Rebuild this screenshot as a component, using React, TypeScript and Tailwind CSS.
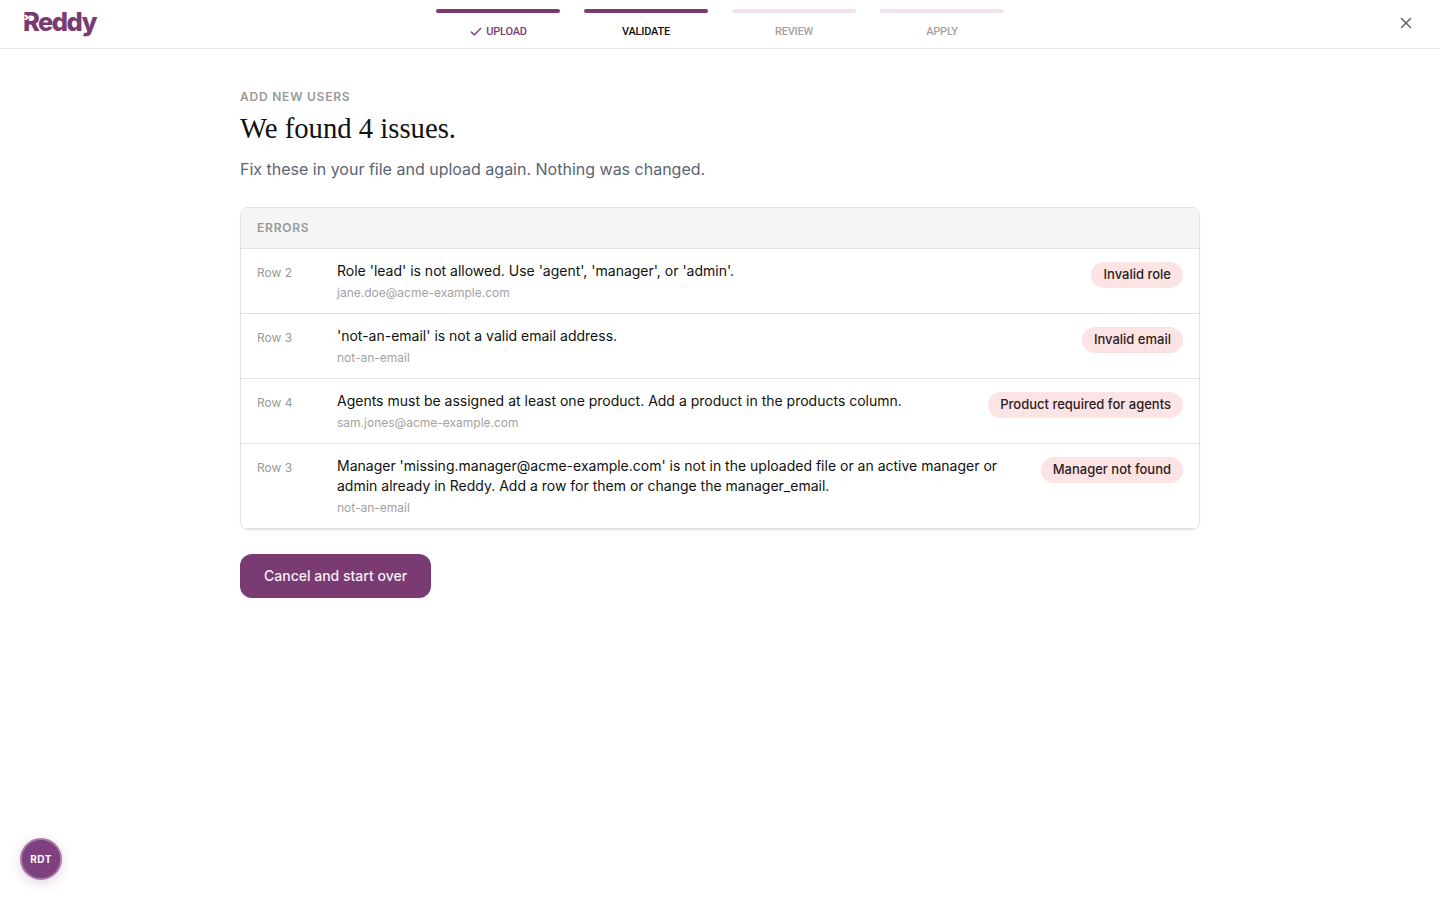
import { Check, X } from "lucide-react";

const steps = [
  { label: "UPLOAD", bar: "bg-[#7a3b72]", text: "text-[#7a3b72]", done: true },
  { label: "VALIDATE", bar: "bg-[#7a3b72]", text: "text-[#111111]", done: false },
  { label: "REVIEW", bar: "bg-[#f0e2ef]", text: "text-[#a3a3a3]", done: false },
  { label: "APPLY", bar: "bg-[#f0e2ef]", text: "text-[#a3a3a3]", done: false },
];

const errors = [
  {
    row: "Row 2",
    message: ["Role 'lead' is not allowed. Use 'agent', 'manager', or 'admin'."],
    detail: "jane.doe@acme-example.com",
    tag: "Invalid role",
  },
  {
    row: "Row 3",
    message: ["'not-an-email' is not a valid email address."],
    detail: "not-an-email",
    tag: "Invalid email",
  },
  {
    row: "Row 4",
    message: ["Agents must be assigned at least one product. Add a product in the products column."],
    detail: "sam.jones@acme-example.com",
    tag: "Product required for agents",
  },
  {
    row: "Row 3",
    message: [
      "Manager 'missing.manager@acme-example.com' is not in the uploaded file or an active manager or",
      "admin already in Reddy. Add a row for them or change the manager_email.",
    ],
    detail: "not-an-email",
    tag: "Manager not found",
  },
];

export default function App() {
  return (
    <div className="min-h-[900px] bg-white font-['Inter',sans-serif] relative">
      {/* Header */}
      <div className="h-[49px] border-b border-[#ebebeb] flex justify-between px-6">
        <div className="relative w-[76px] pt-[4px] text-[25.5px] leading-[36px] font-extrabold tracking-[-0.06em] text-[#7a3b72]">
          <span className="ml-[-1px]">Reddy</span>
          {/* arrow notch cut into the R's stem */}
          <svg className="absolute left-0 top-[15px] h-[5px] w-[6px]" viewBox="0 0 6 5">
            <path d="M0 0 L2.5 0 L5.5 2.5 L2.5 5 L0 5 L2 2.5 Z" fill="#ffffff" />
          </svg>
        </div>
        <div className="flex gap-6 pt-[9px]">
          {steps.map((step) => (
            <div key={step.label} className="w-[124px] flex flex-col items-center">
              <div className={`w-full h-1 rounded-full ${step.bar}`}></div>
              <div className={`mt-[11px] flex items-center gap-[3px] font-['Roboto',sans-serif] text-[11px] leading-[16px] font-medium tracking-[-0.02em] ${step.text}`}>
                {step.done && <Check className="h-3.5 w-3.5" strokeWidth={2.25} />}
                {step.label}
              </div>
            </div>
          ))}
        </div>
        <div className="w-[76px] flex justify-end pt-[14px] pr-px">
          <X className="h-[18px] w-[18px] text-[#666666]" strokeWidth={2} />
        </div>
      </div>

      {/* Content */}
      <div className="w-[960px] mx-auto pt-10">
        <div className="text-xs leading-4 font-semibold tracking-[0.065em] text-[#999999]">ADD NEW USERS</div>
        <h1 className="mt-[3px] font-['Liberation_Serif',serif] text-[28.7px] leading-[40px] font-normal text-[#111111]">
          We found 4 issues.
        </h1>
        <p className="mt-[9px] text-base leading-6 text-[#5b6472]">
          Fix these in your file and upload again. Nothing was changed.
        </p>

        <div className="mt-[26px] border border-[#e3e3e3] rounded-lg overflow-hidden shadow-[0_1px_2px_rgba(0,0,0,0.05)]">
          <div className="h-[41px] bg-[#f5f5f5] border-b border-[#e3e3e3] px-4 flex items-center text-xs font-semibold tracking-[0.065em] text-[#999999]">
            ERRORS
          </div>
          {errors.map((err, i) => (
            <div key={i} className="flex items-start pl-4 pr-4 pt-3 pb-[10px] border-b border-[#e3e3e3]">
              <div className="w-20 pt-[3px] text-xs leading-[18px] text-[#999999]">{err.row}</div>
              <div className="flex-1">
                <div className="text-sm leading-5 text-[#111111]">
                  {err.message.map((line) => (
                    <div key={line}>{line}</div>
                  ))}
                </div>
                <div className="mt-[2px] text-xs leading-5 text-[#a3a3a3]">{err.detail}</div>
              </div>
              <div className="mt-px h-[26px] px-3 rounded-full bg-[#fde4e4] text-[13px] font-medium text-[#2b2024] flex items-center">
                {err.tag}
              </div>
            </div>
          ))}
        </div>

        <button className="mt-6 h-11 px-6 rounded-xl bg-[#7a3b72] text-sm font-medium text-[#f7eef6]">
          Cancel and start over
        </button>
      </div>

      {/* Floating badge */}
      <div className="absolute left-5 bottom-5 h-[42px] w-[42px] rounded-full bg-[#7f4080] border-2 border-[#a97aa6] shadow-[0_3px_12px_rgba(122,59,114,0.22)] flex items-center justify-center text-[10px] font-bold tracking-[0.05em] text-white">
        RDT
      </div>
    </div>
  );
}
